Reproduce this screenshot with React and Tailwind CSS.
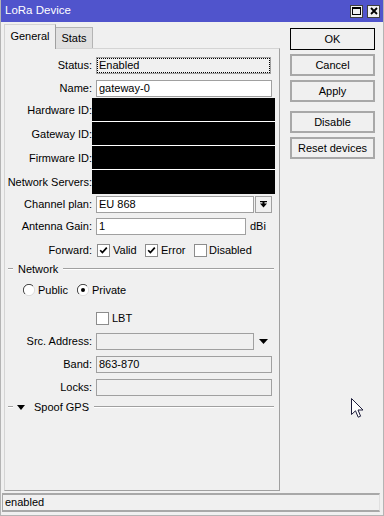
import React from 'react';

// --- small widgets ---
const Field = ({ w, value, ro, dotted, children }) => (
  <div
    className={`h-[17px] border border-[#a0a0a0] ${ro ? 'bg-[#f0f0f0]' : 'bg-white'} flex items-center shrink-0`}
    style={{ width: w }}
  >
    {dotted ? (
      <div className="h-full w-full border border-dotted border-black flex items-center px-[1px] leading-none">{value}</div>
    ) : (
      <span className="px-[2px] leading-none">{value}</span>
    )}
    {children}
  </div>
);

const Label = ({ children }) => (
  <div className="w-[87px] shrink-0 text-right whitespace-nowrap leading-none">{children}</div>
);

const Row = ({ label, className = '', children }) => (
  <div className={`flex items-center ${className}`}>
    <Label>{label}</Label>
    <div className="flex items-center pl-[4px]">{children}</div>
  </div>
);

const Check = ({ on }) => (
  <div className="w-[13px] h-[13px] border border-[#8c8c8c] bg-white shrink-0 flex items-center justify-center">
    {on && (
      <svg width="9" height="9" viewBox="0 0 9 9">
        <path d="M1.2 4.2 L3.4 6.6 L7.8 1.6" fill="none" stroke="#000" strokeWidth="1.7" />
      </svg>
    )}
  </div>
);

const Radio = ({ on }) => (
  <svg width="12" height="12" viewBox="0 0 12 12" className="shrink-0">
    <circle cx="6" cy="6" r="5.5" fill="#fff" />
    <path d="M10 2 A5.5 5.5 0 0 0 2 10" fill="none" stroke="#404040" strokeWidth="1" />
    <path d="M2 10 A5.5 5.5 0 0 0 10 2" fill="none" stroke="#dcdcdc" strokeWidth="1" />
    {on && <circle cx="6" cy="6" r="2" fill="#000" />}
  </svg>
);

const DownTri = ({ w = 9, h = 5 }) => (
  <svg width={w} height={h} viewBox={`0 0 ${w} ${h}`} className="shrink-0">
    <polygon points={`0,0 ${w},0 ${w / 2},${h}`} fill="#000" />
  </svg>
);

const Etched = ({ className = '' }) => (
  <div className={`h-[2px] border-t border-[#a0a0a0] border-b border-b-white ${className}`} />
);

const Btn = ({ children, def, className = '' }) => (
  <div
    className={`w-[85px] h-[22px] flex items-center justify-center bg-[#f0f0f0] leading-none ${
      def ? 'border border-black' : 'border-2 border-[#a8a8a8]'
    } ${className}`}
  >
    {children}
  </div>
);

const Hidden = ({ label, last }) => (
  <div className="flex items-center h-[24px]">
    <Label>{label}</Label>
    <div className={`w-[183px] h-full bg-black ${last ? '' : 'border-b border-white'}`} />
  </div>
);

export default function App() {
  return (
    <div className="w-[384px] h-[516px] bg-[#f0f0f0] relative overflow-hidden flex flex-col border-x border-b border-[#b4b4b4] text-[11px] text-black font-['Liberation_Sans',Arial,sans-serif]">
      {/* TITLE BAR */}
      <div className="h-[22px] bg-[#5054cc] flex items-center pl-[4px] text-white text-[11.5px] shrink-0">
        <span>LoRa Device</span>
        <div className="ml-auto mr-[3px] flex gap-[4px]">
          <div className="w-[13px] h-[13px] bg-[#f0f0f0] border border-[#404040] flex items-center justify-center">
            <div className="w-[9px] h-[8px] border border-black border-t-2" />
          </div>
          <div className="w-[13px] h-[13px] bg-[#f0f0f0] border border-[#404040] flex items-center justify-center">
            <svg width="8" height="8" viewBox="0 0 8 8">
              <path d="M1 1 L7 7 M7 1 L1 7" stroke="#000" strokeWidth="1.8" />
            </svg>
          </div>
        </div>
      </div>

      <div className="flex">
        {/* LEFT: TABS + PANEL */}
        <div className="ml-[3px] w-[276px] flex flex-col">
          <div className="flex items-end h-[26px] pt-[2px]">
            <div className="relative z-10 w-[52px] h-[25px] -mb-[1px] bg-[#f0f0f0] border-t border-l border-[#d4d4d4] border-r border-r-[#a0a0a0] flex items-center justify-center pb-[2px]">
              General
            </div>
            <div className="w-[37px] h-[21px] bg-[#e0e0e0] border-t border-r border-[#b4b4b4] flex items-center justify-center pt-[1px]">
              Stats
            </div>
          </div>

          <div className="h-[443px] border-t border-l border-[#d4d4d4] border-r border-b border-r-[#a0a0a0] border-b-[#a0a0a0] flex flex-col pt-[8px]">
            <Row label="Status:">
              <Field w={175} ro dotted value="Enabled" />
            </Row>
            <Row label="Name:" className="mt-[6px]">
              <Field w={176} value="gateway-0" />
            </Row>

            <div className="mt-[1px] flex flex-col">
              <Hidden label="Hardware ID:" />
              <Hidden label="Gateway ID:" />
              <Hidden label="Firmware ID:" />
              <Hidden label="Network Servers:" last />
            </div>

            <Row label="Channel plan:" className="mt-[2px]">
              <Field w={158} value="EU 868" />
              <div className="ml-[1px] w-[17px] h-[17px] border border-[#a0a0a0] bg-[#f0f0f0] flex items-center justify-center">
                <svg width="7" height="7" viewBox="0 0 7 7">
                  <rect x="0" y="0" width="7" height="1.2" fill="#000" />
                  <polygon points="0,2.5 7,2.5 3.5,6.5" fill="#000" />
                  <rect x="2.5" y="1" width="2" height="2" fill="#000" />
                </svg>
              </div>
            </Row>

            <Row label="Antenna Gain:" className="mt-[5px]">
              <Field w={150} value="1" />
              <span className="ml-[4px] leading-none">dBi</span>
            </Row>

            <Row label="Forward:" className="mt-[9px]">
              <div className="w-[49px] flex items-center pl-[1px]">
                <Check on />
                <span className="ml-[3px] leading-none">Valid</span>
              </div>
              <div className="w-[49px] flex items-center">
                <Check on />
                <span className="ml-[3px] leading-none">Error</span>
              </div>
              <div className="flex items-center">
                <Check />
                <span className="ml-[2px] leading-none">Disabled</span>
              </div>
            </Row>

            {/* NETWORK SECTION */}
            <div className="mt-[5px] h-[14px] flex items-center">
              <Etched className="ml-[3px] w-[5px]" />
              <span className="ml-[5px] leading-none">Network</span>
              <Etched className="ml-[5px] flex-1 mr-[5px]" />
            </div>

            <div className="mt-[7px] h-[14px] flex items-center pl-[18px]">
              <div className="w-[54px] flex items-center">
                <Radio />
                <span className="ml-[3px] leading-none">Public</span>
              </div>
              <div className="flex items-center">
                <Radio on />
                <span className="ml-[3px] leading-none">Private</span>
              </div>
            </div>

            <div className="mt-[15px] flex items-center pl-[91px]">
              <Check />
              <span className="ml-[3px] leading-none">LBT</span>
            </div>

            <Row label="Src. Address:" className="mt-[8px]">
              <Field w={158} ro value="" />
              <div className="ml-[5px]">
                <DownTri w={9} h={5} />
              </div>
            </Row>
            <Row label="Band:" className="mt-[6px]">
              <Field w={176} ro value="863-870" />
            </Row>
            <Row label="Locks:" className="mt-[6px]">
              <Field w={176} ro value="" />
            </Row>

            {/* SPOOF GPS */}
            <div className="mt-[4px] h-[14px] flex items-center">
              <Etched className="ml-[3px] w-[5px]" />
              <div className="ml-[4px]">
                <DownTri w={8} h={5} />
              </div>
              <span className="ml-[9px] leading-none">Spoof GPS</span>
              <Etched className="ml-[5px] flex-1 mr-[5px]" />
            </div>
          </div>
        </div>

        {/* RIGHT: BUTTONS */}
        <div className="ml-[10px] pt-[6px] flex flex-col gap-[4px]">
          <Btn def>OK</Btn>
          <Btn>Cancel</Btn>
          <Btn>Apply</Btn>
          <Btn className="mt-[5px]">Disable</Btn>
          <Btn>Reset devices</Btn>
        </div>
      </div>

      {/* STATUS BAR */}
      <div className="mt-[2px] ml-[1px] w-[378px] h-[19px] border-t-2 border-l border-b-2 border-[#a8a8a8] border-r border-r-[#e0e0e0] flex items-center pl-[2px] leading-none">
        enabled
      </div>

      {/* MOUSE CURSOR */}
      <svg className="absolute left-[350px] top-[398px]" width="13" height="21" viewBox="0 0 13 21">
        <path
          d="M0.5 0.5 L0.5 16.5 L4.5 12.8 L7.2 19.2 L9.6 18.2 L7 12 L12 12 Z"
          fill="#fff"
          stroke="#1c1c3a"
          strokeWidth="1"
          strokeLinejoin="miter"
        />
      </svg>
    </div>
  );
}
